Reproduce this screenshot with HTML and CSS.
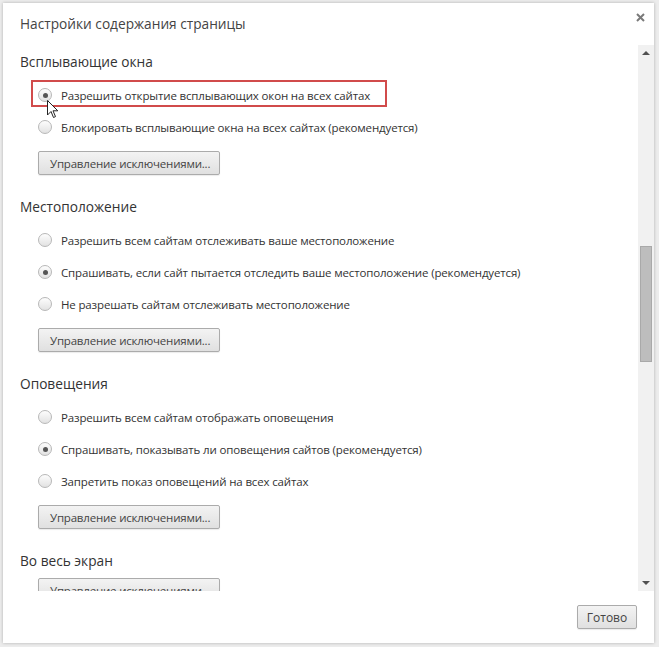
FILE: index.html
```html
<!DOCTYPE html>
<html lang="ru">
<head>
<meta charset="utf-8">
<title>Настройки содержания страницы</title>
<link rel="stylesheet" href="styles.css">
</head>
<body>
<div class="dialog">
  <div class="header">
    <h1 class="title">Настройки содержания страницы</h1>
    <svg class="close" width="9" height="9" viewBox="0 0 9 9"><path d="M1 1 L8 8 M8 1 L1 8" stroke="#7a7a7a" stroke-width="2"/></svg>
  </div>
  <div class="body">
    <div class="content">
      <section class="section">
        <h2 class="heading">Всплывающие окна</h2>
        <div class="options">
          <div class="option highlight"><span class="radio checked"></span><span class="label">Разрешить открытие всплывающих окон на всех сайтах</span>
            <svg class="cursor" width="12" height="19" viewBox="0 0 12 19"><path d="M0.5 0.5 L0.5 15 L4 11.5 L6.5 17.5 L8.5 16.6 L6 10.8 L10.8 10.8 Z" fill="#fff" stroke="#222" stroke-width="1"/></svg>
          </div>
          <div class="option"><span class="radio"></span><span class="label">Блокировать всплывающие окна на всех сайтах (рекомендуется)</span></div>
        </div>
        <button class="btn">Управление исключениями...</button>
      </section>
      <section class="section">
        <h2 class="heading">Местоположение</h2>
        <div class="options">
          <div class="option"><span class="radio"></span><span class="label">Разрешить всем сайтам отслеживать ваше местоположение</span></div>
          <div class="option"><span class="radio checked"></span><span class="label">Спрашивать, если сайт пытается отследить ваше местоположение (рекомендуется)</span></div>
          <div class="option"><span class="radio"></span><span class="label">Не разрешать сайтам отслеживать местоположение</span></div>
        </div>
        <button class="btn">Управление исключениями...</button>
      </section>
      <section class="section">
        <h2 class="heading">Оповещения</h2>
        <div class="options">
          <div class="option"><span class="radio"></span><span class="label">Разрешить всем сайтам отображать оповещения</span></div>
          <div class="option"><span class="radio checked"></span><span class="label">Спрашивать, показывать ли оповещения сайтов (рекомендуется)</span></div>
          <div class="option"><span class="radio"></span><span class="label">Запретить показ оповещений на всех сайтах</span></div>
        </div>
        <button class="btn">Управление исключениями...</button>
      </section>
      <section class="section">
        <h2 class="heading">Во весь экран</h2>
        <button class="btn btn-direct">Управление исключениями...</button>
      </section>
    </div>
    <div class="scrollbar">
      <span class="arrow up"></span>
      <div class="track"><div class="thumb"></div></div>
      <span class="arrow down"></span>
    </div>
  </div>
  <div class="footer">
    <button class="btn btn-done">Готово</button>
  </div>
</div>
</body>
</html>
```

FILE: styles.css
```css
html, body {
  margin: 0;
  padding: 0;
}
body {
  background: #ececec;
  width: 659px;
  height: 647px;
  padding: 3px 0 0 3px;
  box-sizing: border-box;
  font-family: "Open Sans", "Noto Sans", "DejaVu Sans", sans-serif;
  color: #333;
}
.dialog {
  width: 651px;
  height: 640px;
  background: #fff;
  box-shadow: 0 0 3px rgba(0,0,0,0.25);
  display: flex;
  flex-direction: column;
  box-sizing: border-box;
}
.header {
  height: 42px;
  flex: none;
  display: flex;
  align-items: center;
  justify-content: space-between;
  padding: 0 9px 0 17px;
  box-sizing: border-box;
}
.title {
  margin: 0;
  font-size: 13.7px;
  font-weight: normal;
  color: #444;
  position: relative;
  top: -1px;
}
.close {
  position: relative;
  top: -7px;
}
.body {
  height: 546px;
  flex: none;
  display: flex;
}
.content {
  flex: 1;
  overflow: hidden;
  padding: 7px 0 0 17px;
}
.section {
  margin-bottom: 22px;
}
.heading {
  margin: 0;
  height: 20px;
  line-height: 20px;
  font-size: 13.7px;
  font-weight: normal;
  color: #333;
}
.options {
  margin-top: 7px;
  margin-left: 17px;
}
.option {
  height: 32px;
  display: flex;
  align-items: center;
  font-size: 11.5px;
  color: #333;
  position: relative;
}
.radio {
  width: 14px;
  height: 14px;
  border-radius: 50%;
  border: 1px solid #b8b8b8;
  background: linear-gradient(#fdfdfd, #e2e2e2);
  box-sizing: border-box;
  margin-right: 9px;
  margin-left: 1px;
  position: relative;
  flex: none;
}
.radio.checked::after {
  content: "";
  position: absolute;
  left: 3.5px;
  top: 3.5px;
  width: 5px;
  height: 5px;
  border-radius: 50%;
  background: #555;
}
.label {
  white-space: nowrap;
  letter-spacing: -0.15px;
}
.highlight::before {
  content: "";
  position: absolute;
  left: -6px;
  top: 1px;
  width: 356px;
  height: 27px;
  border: 2px solid #d14b4b;
  box-sizing: border-box;
}
.cursor {
  position: absolute;
  left: 10px;
  top: 21px;
}
.btn {
  display: block;
  margin: 8px 0 0 18px;
  height: 24px;
  width: 182px;
  padding: 0 11px;
  text-align: left;
  white-space: nowrap;
  border: 1px solid #ababab;
  border-radius: 2px;
  background: linear-gradient(#f3f3f3, #e0e0e0);
  font-family: "Open Sans", "Noto Sans", "DejaVu Sans", sans-serif;
  font-size: 11.5px;
  letter-spacing: -0.2px;
  color: #444;
  box-shadow: 0 1px 1px rgba(0,0,0,0.08);
}
.btn-direct {
  margin-top: 7px;
}
.scrollbar {
  width: 16px;
  flex: none;
  background: #f1f1f1;
  display: flex;
  flex-direction: column;
  align-items: center;
}
.arrow {
  width: 0;
  height: 0;
  border-left: 4px solid transparent;
  border-right: 4px solid transparent;
  flex: none;
}
.arrow.up {
  border-bottom: 4px solid #505050;
  margin: 6px 0;
}
.arrow.down {
  border-top: 4px solid #505050;
  margin: 6px 0;
}
.track {
  flex: 1;
  width: 100%;
}
.thumb {
  margin: 185px auto 0;
  width: 12px;
  height: 116px;
  background: #bdbdbd;
  border: 1px solid #a9a9a9;
  box-sizing: border-box;
}
.footer {
  flex: 1;
  display: flex;
  justify-content: flex-end;
  align-items: flex-start;
  padding: 14px 17px 0 0;
}
.btn-done {
  margin: 0;
  width: 60px;
  text-align: center;
  padding: 0;
  font-size: 12px;
  letter-spacing: 0;
}
```
